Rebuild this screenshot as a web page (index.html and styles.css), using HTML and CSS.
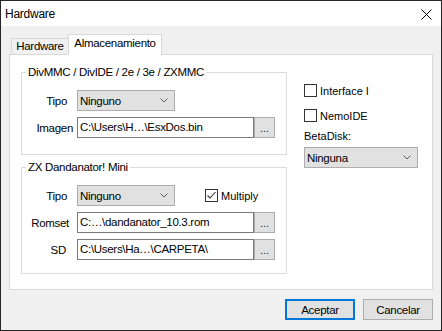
FILE: index.html
```html
<!DOCTYPE html>
<html lang="es">
<head>
  <meta charset="UTF-8">
  <title>Hardware</title>
  <link rel="stylesheet" href="styles.css">
</head>
<body>

  <div class="window">
    <div class="titlebar">
      <span class="title">Hardware</span>
      <svg class="close" width="11" height="11" viewBox="0 0 11 11">
        <path d="M0.5 0.5L10.5 10.5M10.5 0.5L0.5 10.5" stroke="#000" stroke-width="1"/>
      </svg>
    </div>

    <div class="client">
      <div class="tabs">
        <div class="tab">Hardware</div>
        <div class="tab active">Almacenamiento</div>
      </div>

      <div class="page">
        <div class="groups">
          <fieldset class="group">
            <legend>DivMMC / DivIDE / 2e / 3e / ZXMMC</legend>
            <div class="rows rows-first">
              <div class="row">
                <label class="lbl lbl-tipo">Tipo</label>
                <div class="combo">
                  <span>Ninguno</span>
                  <svg class="chevron" width="8" height="5" viewBox="0 0 8 5"><path d="M0.5 0.5L4 4L7.5 0.5" fill="none" stroke="#606060"/></svg>
                </div>
              </div>
              <div class="row">
                <label class="lbl lbl-imagen">Imagen</label>
                <div class="textbox">C:\Users\H…\EsxDos.bin</div>
                <button class="browse">...</button>
              </div>
            </div>
          </fieldset>

          <fieldset class="group group-second">
            <legend>ZX Dandanator! Mini</legend>
            <div class="rows rows-second">
              <div class="row">
                <label class="lbl lbl-tipo">Tipo</label>
                <div class="combo">
                  <span>Ninguno</span>
                  <svg class="chevron" width="8" height="5" viewBox="0 0 8 5"><path d="M0.5 0.5L4 4L7.5 0.5" fill="none" stroke="#606060"/></svg>
                </div>
                <div class="check check-multiply">
                  <span class="box">
                    <svg width="11" height="11" viewBox="0 0 11 11"><path d="M1.5 5.5L4 8L9.5 2" fill="none" stroke="#333" stroke-width="1.1"/></svg>
                  </span>
                  <span class="check-text">Multiply</span>
                </div>
              </div>
              <div class="row">
                <label class="lbl lbl-romset">Romset</label>
                <div class="textbox">C:…\dandanator_10.3.rom</div>
                <button class="browse">...</button>
              </div>
              <div class="row">
                <label class="lbl lbl-sd">SD</label>
                <div class="textbox">C:\Users\Ha…\CARPETA\</div>
                <button class="browse">...</button>
              </div>
            </div>
          </fieldset>
        </div>

        <div class="side">
          <div class="check">
            <span class="box"></span>
            <span class="check-text">Interface I</span>
          </div>
          <div class="check check-nemo">
            <span class="box"></span>
            <span class="check-text">NemoIDE</span>
          </div>
          <div class="beta-label">BetaDisk:</div>
          <div class="combo combo-beta">
            <span>Ninguna</span>
            <svg class="chevron" width="8" height="5" viewBox="0 0 8 5"><path d="M0.5 0.5L4 4L7.5 0.5" fill="none" stroke="#606060"/></svg>
          </div>
        </div>
      </div>

      <div class="buttons">
        <button class="btn btn-default">Aceptar</button>
        <button class="btn">Cancelar</button>
      </div>
    </div>
  </div>

</body>
</html>
```

FILE: styles.css
```css
* {
  box-sizing: border-box;
}

body {
  margin: 0;
  font-family: 'Liberation Sans', Arial, sans-serif;
  font-size: 11.5px;
  letter-spacing: -0.3px;
  color: #000;
}

.window {
  width: 442px;
  height: 331px;
  border: 1px solid #262626;
  background: #f0f0f0;
}

.titlebar {
  height: 25px;
  background: #ffffff;
  display: flex;
  align-items: center;
  justify-content: space-between;
  padding: 0 9px 0 4px;
}

.title {
  font-size: 12px;
  letter-spacing: -0.25px;
}

.close {
  display: block;
  margin-top: 1px;
}

.client {
  padding: 8px 8px 0;
}

/* tabs */
.tabs {
  display: flex;
  align-items: flex-end;
  height: 20px;
  padding-left: 2px;
}

.tab {
  height: 16px;
  width: 57px;
  line-height: 15px;
  text-align: center;
  border: 1px solid #d9d9d9;
  border-right: none;
  border-bottom: none;
  background: #f0f0f0;
}

.tab.active {
  height: 21px;
  width: 94px;
  line-height: 17px;
  border-right: 1px solid #d9d9d9;
  background: #ffffff;
  margin-bottom: -1px;
  position: relative;
  z-index: 1;
}

.page {
  height: 236px;
  background: #ffffff;
  border: 1px solid #d9d9d9;
  display: flex;
  padding: 10px 0 0 11px;
}

/* group boxes */
.group {
  width: 266px;
  margin: 0;
  padding: 0;
  min-width: 0;
  border: 1px solid #dcdcdc;
}

.group legend {
  padding: 0 2px;
  margin-left: 4px;
  line-height: 15px;
}

.group-second {
  margin-top: 5px;
}

.rows {
  display: flex;
  flex-direction: column;
  gap: 6px;
  padding-top: 10px;
}

.rows-first {
  padding-bottom: 16px;
}

.rows-second {
  padding-bottom: 13px;
}

.row {
  display: flex;
  align-items: center;
  height: 21px;
}

.lbl {
  width: 55px;
  text-align: right;
}

.lbl-tipo { padding-right: 10px; }
.lbl-imagen { padding-right: 4px; }
.lbl-romset { padding-right: 8px; }
.lbl-sd { padding-right: 11px; }

.combo {
  width: 98px;
  height: 21px;
  border: 1px solid #adadad;
  background: #e1e1e1;
  display: flex;
  align-items: center;
  justify-content: space-between;
  padding: 0 6px 0 2px;
}

.chevron {
  display: block;
}

.textbox {
  width: 177px;
  height: 21px;
  border: 1px solid #7a7a7a;
  background: #ffffff;
  line-height: 19px;
  padding-left: 2px;
  white-space: nowrap;
  overflow: hidden;
}

.browse {
  width: 21px;
  height: 21px;
  margin: 0;
  padding: 0 0 3px;
  border: 1px solid #adadad;
  background: #e1e1e1;
  font-family: inherit;
  font-size: 11px;
  color: #1a1a60;
  line-height: 21px;
}

/* check boxes */
.check {
  display: flex;
  align-items: center;
  gap: 3px;
  height: 17px;
  letter-spacing: 0;
}

.check-text {
  font-size: 11px;
}

.check-multiply {
  margin-left: 30px;
}

.box {
  width: 13px;
  height: 13px;
  border: 1px solid #333333;
  background: #ffffff;
  display: flex;
  align-items: center;
  justify-content: center;
}

.box svg {
  display: block;
}

/* right column */
.side {
  margin-left: 17px;
  margin-top: 17px;
}

.check-nemo {
  margin-top: 8px;
}

.beta-label {
  margin-top: 4px;
  line-height: 16px;
  font-size: 11px;
  letter-spacing: 0;
}

.combo-beta {
  width: 114px;
  margin-top: 3px;
}

/* dialog buttons */
.buttons {
  display: flex;
  justify-content: flex-end;
  gap: 8px;
  margin-top: 9px;
}

.btn {
  width: 70px;
  height: 21px;
  margin: 0;
  padding: 0;
  border: 1px solid #adadad;
  background: #e1e1e1;
  font-family: inherit;
  font-size: 11.5px;
  letter-spacing: -0.3px;
  color: #000;
}

.btn-default {
  border: 2px solid #0078d7;
}
```
